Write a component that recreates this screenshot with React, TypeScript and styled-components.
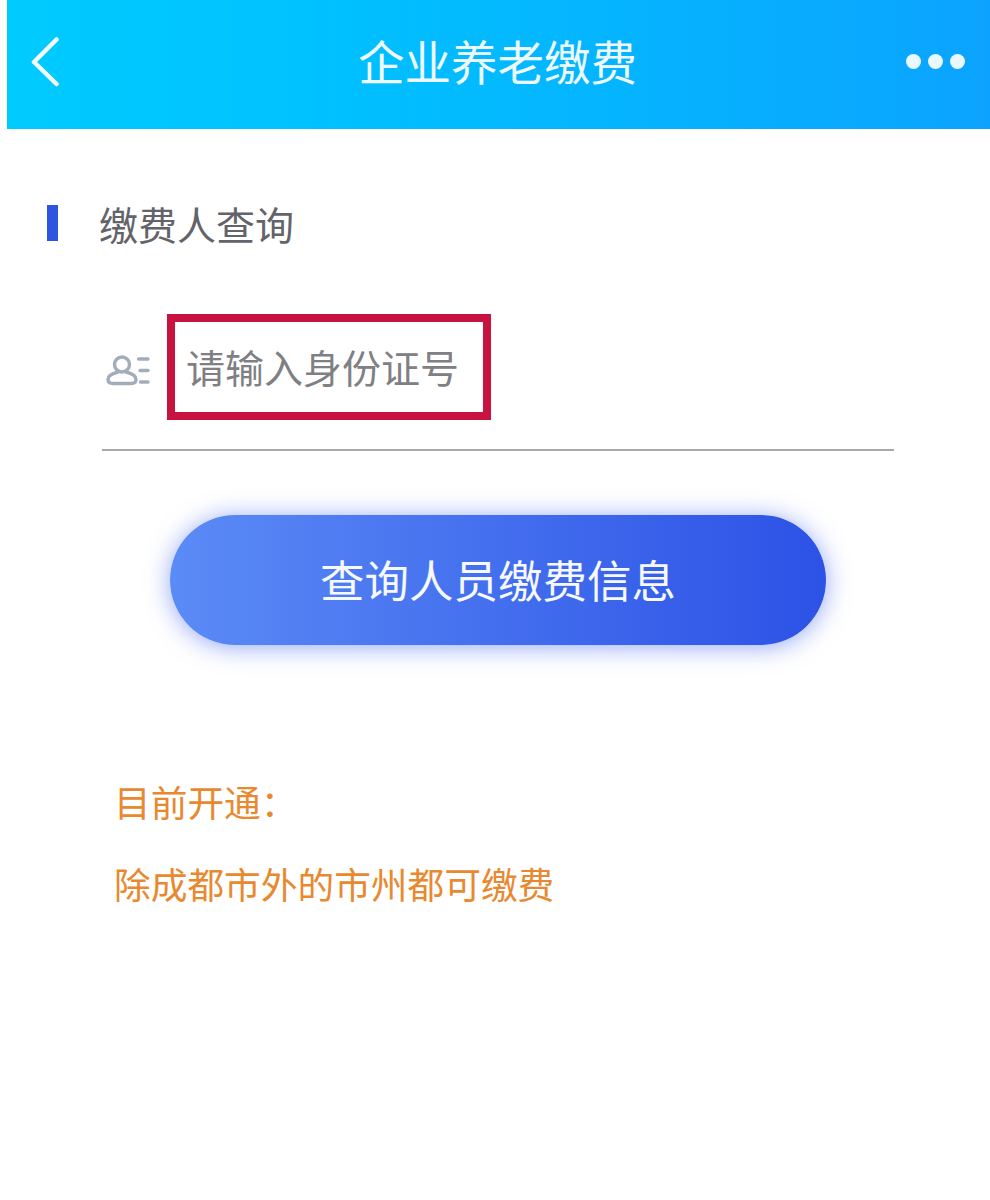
import React from 'react';
import styled, { createGlobalStyle } from 'styled-components';

const GlobalStyle = createGlobalStyle`
  html, body {
    margin: 0;
    padding: 0;
    background: #fff;
  }
  body {
    font-family: "Liberation Sans", "Noto Sans CJK SC", sans-serif;
  }
`;

const App = () => {
  return (
    <Page>
      <GlobalStyle />
      <Header>
        <BackButton aria-label="back">
          <svg width="32" height="52" viewBox="0 0 32 52" fill="none">
            <path d="M25.5 3.5 L3 26 L25.5 48" stroke="#f2fbff" strokeWidth="4.5" strokeLinecap="round" strokeLinejoin="round" />
          </svg>
        </BackButton>
        <Title>企业养老缴费</Title>
        <MoreDots>
          <Dot />
          <Dot />
          <Dot />
        </MoreDots>
      </Header>

      <Section>
        <SectionMark />
        <SectionTitle>缴费人查询</SectionTitle>
      </Section>

      <InputRow>
        <IdIcon>
          <svg width="44" height="32" viewBox="0 0 44 32" fill="none">
            <circle cx="16" cy="10.5" r="7.5" stroke="#a3adb9" strokeWidth="3.4" />
            <path d="M12 18 C6 19.5 2 22 2 25.5 C2 28.5 4 29.5 7 29.5 L25 29.5 C28 29.5 30 28.5 30 25.5 C30 22 26 19.5 20 18" stroke="#a3adb9" strokeWidth="3.4" strokeLinecap="round" />
            <path d="M32.5 5 H42 M34 16.5 H42 M34.5 28 H42" stroke="#a3adb9" strokeWidth="3.4" strokeLinecap="round" />
          </svg>
        </IdIcon>
        <HighlightBox>
          <Placeholder>请输入身份证号</Placeholder>
        </HighlightBox>
      </InputRow>

      <ButtonRow>
        <QueryButton>查询人员缴费信息</QueryButton>
      </ButtonRow>

      <Notice>
        <NoticeLine>目前开通：</NoticeLine>
        <NoticeLine>除成都市外的市州都可缴费</NoticeLine>
      </Notice>
    </Page>
  );
};

export default App;

const Page = styled.div`
  width: 990px;
  height: 1200px;
  background: #fff;
  overflow: hidden;
`;

const Header = styled.div`
  margin-left: 7px;
  height: 129px;
  padding: 0 25px 0 24px;
  box-sizing: border-box;
  display: flex;
  align-items: center;
  justify-content: space-between;
  background: linear-gradient(90deg, #00cbff 0%, #00c2ff 30%, #0ba3ff 100%);
`;

const BackButton = styled.div`
  width: 32px;
  height: 52px;
  margin-top: -5px;
`;

const Title = styled.div`
  flex: 1;
  text-align: center;
  margin-top: -1px;
  padding-left: 26px;
  font-size: 46.5px;
  line-height: 60px;
  color: #eef9ff;
`;

const MoreDots = styled.div`
  display: flex;
  gap: 7px;
  margin-top: -7px;
`;

const Dot = styled.span`
  width: 15px;
  height: 15px;
  border-radius: 50%;
  background: #e9f8ff;
`;

const Section = styled.div`
  height: 52px;
  margin-top: 72px;
  padding-left: 47px;
  display: flex;
  align-items: center;
`;

const SectionMark = styled.span`
  width: 11px;
  height: 36px;
  margin-top: -8px;
  background: #2f55e0;
`;

const SectionTitle = styled.span`
  margin-left: 41px;
  font-size: 39px;
  line-height: 52px;
  color: #636469;
`;

const InputRow = styled.div`
  width: 792px;
  height: 135px;
  margin: 61px 0 0 102px;
  display: flex;
  align-items: flex-start;
  border-bottom: 2px solid #a9a9ab;
`;

const IdIcon = styled.div`
  width: 65px;
  height: 32px;
  margin-top: 40px;
  padding-left: 4px;
  box-sizing: border-box;
`;

const HighlightBox = styled.div`
  width: 324px;
  height: 106px;
  box-sizing: border-box;
  border: 8px solid #c81240;
  display: flex;
  align-items: center;
  padding: 5px 0 0 11px;
`;

const Placeholder = styled.span`
  font-size: 39px;
  line-height: 52px;
  white-space: nowrap;
  color: #808084;
`;

const ButtonRow = styled.div`
  display: flex;
  margin: 64px 0 0 170px;
`;

const QueryButton = styled.div`
  width: 656px;
  height: 130px;
  box-sizing: border-box;
  padding-bottom: 3px;
  border-radius: 65px;
  display: flex;
  align-items: center;
  justify-content: center;
  font-size: 44.5px;
  color: #f6f9ff;
  background: linear-gradient(90deg, #5b8bf6 0%, #2c52e6 100%);
  box-shadow: 0 2px 24px rgba(60, 95, 240, 0.55);
`;

const Notice = styled.div`
  margin: 136px 0 0 114px;
  display: flex;
  flex-direction: column;
  gap: 34px;
`;

const NoticeLine = styled.div`
  font-size: 36.7px;
  line-height: 48px;
  color: #e8892f;
`;
